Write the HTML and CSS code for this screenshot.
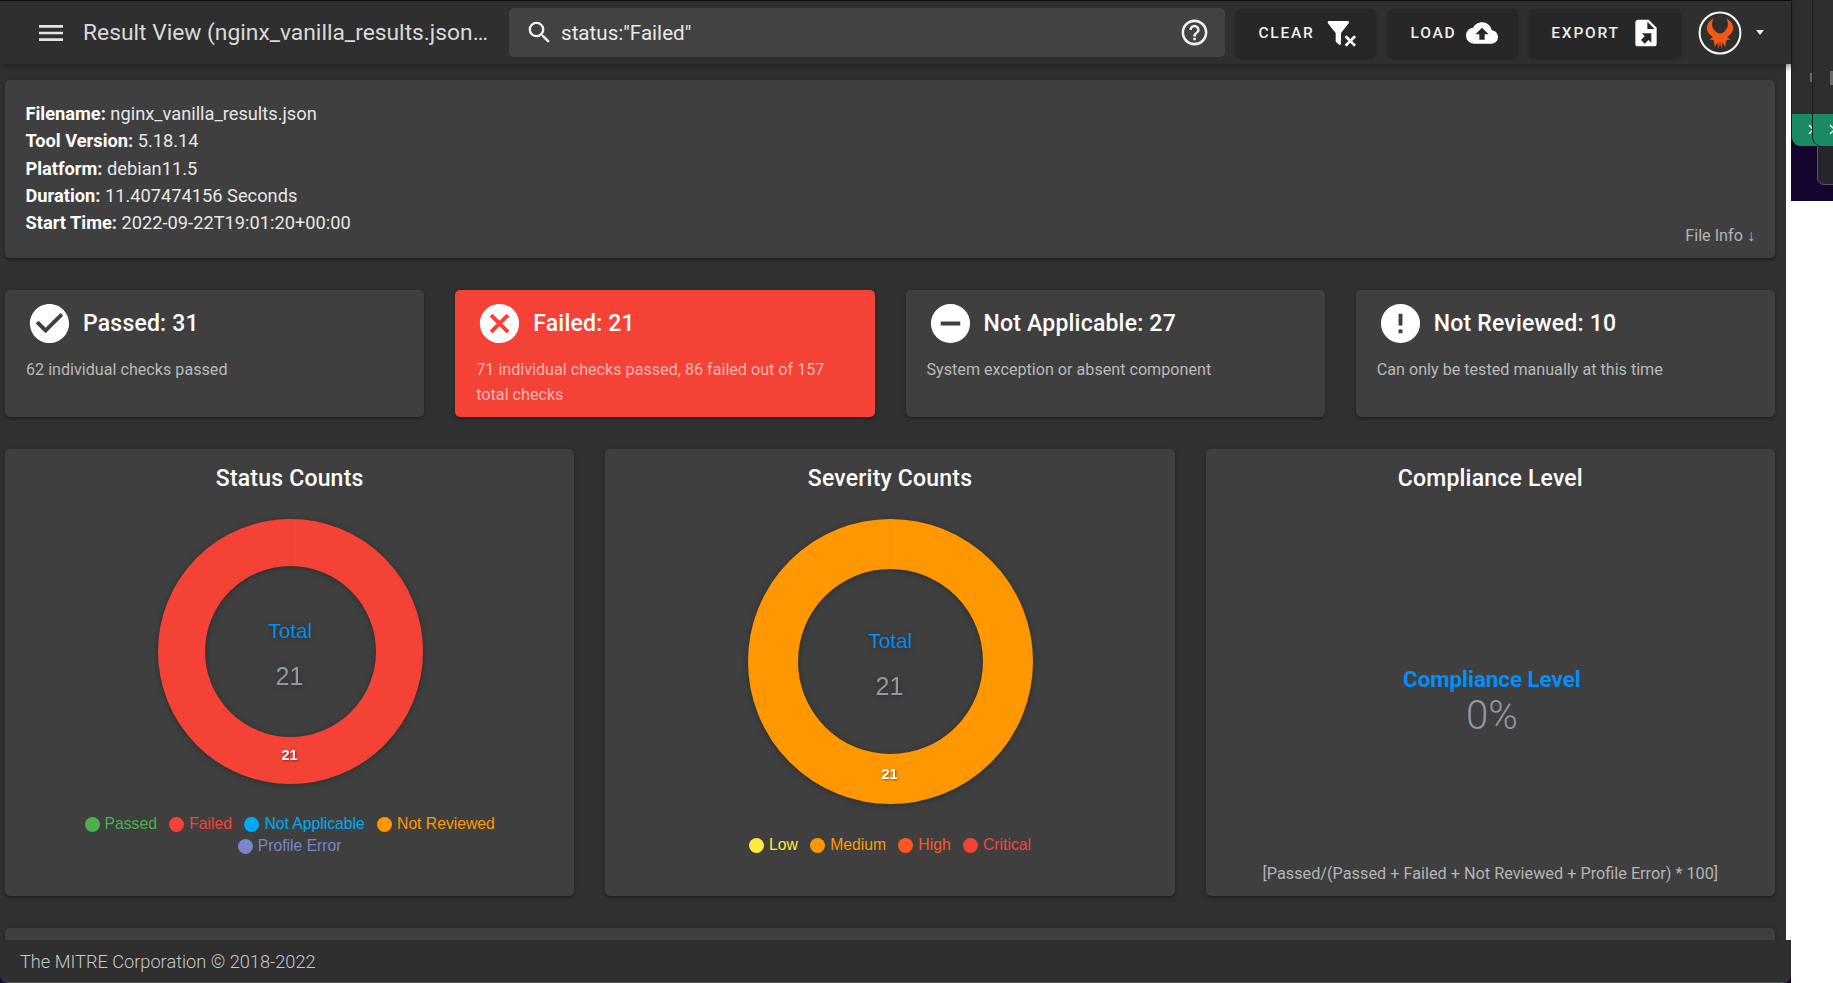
FILE: index.html
```html
<!DOCTYPE html>
<html lang="en">
<head>
    <meta charset="UTF-8">
    <meta name="viewport" content="width=device-width, initial-scale=1.0">
    <title>Result View</title>
    <link rel="stylesheet" href="styles.css">
</head>
<body>
    <div class="app">
        <header class="topbar">
            <button class="icon-btn menu-btn" aria-label="Menu">
                <svg viewBox="0 0 24 24" class="icon-menu"><path d="M3,6H21V8H3V6M3,11H21V13H3V11M3,16H21V18H3V16Z"/></svg>
            </button>
            <div class="topbar-title">Result View (nginx_vanilla_results.json…</div>
            <div class="search">
                <svg viewBox="0 0 24 24" class="icon-search"><path d="M9.5,3A6.5,6.5 0 0,1 16,9.5C16,11.11 15.41,12.59 14.44,13.73L14.71,14H15.5L20.5,19L19,20.5L14,15.5V14.71L13.73,14.44C12.59,15.41 11.11,16 9.5,16A6.5,6.5 0 0,1 3,9.5A6.5,6.5 0 0,1 9.5,3M9.5,5C7,5 5,7 5,9.5C5,12 7,14 9.5,14C12,14 14,12 14,9.5C14,7 12,5 9.5,5Z"/></svg>
                <span class="search-text">status:"Failed"</span>
                <svg viewBox="0 0 24 24" class="icon-help"><path d="M11,18H13V16H11V18M12,2A10,10 0 0,0 2,12A10,10 0 0,0 12,22A10,10 0 0,0 22,12A10,10 0 0,0 12,2M12,20C7.59,20 4,16.41 4,12C4,7.59 7.59,4 12,4C16.41,4 20,7.59 20,12C20,16.41 16.41,20 12,20M12,6A4,4 0 0,0 8,10H10A2,2 0 0,1 12,8A2,2 0 0,1 14,10C14,12 11,11.75 11,15H13C13,12.75 16,12.5 16,10A4,4 0 0,0 12,6Z"/></svg>
            </div>
            <button class="bar-btn btn-clear">Clear
                <svg viewBox="0 0 24 24"><path d="M14.76,20.83L17.6,18L14.76,15.17L16.17,13.76L19,16.57L21.83,13.76L23.24,15.17L20.41,18L23.24,20.83L21.83,22.24L19,19.4L16.17,22.24L14.76,20.83M12,12V19.88C12.04,20.18 11.94,20.5 11.71,20.71C11.32,21.1 10.69,21.1 10.3,20.71L8.29,18.7C8.06,18.47 7.96,18.16 8,17.87V12H7.97L2.21,4.62C1.87,4.19 1.95,3.56 2.38,3.22C2.57,3.08 2.78,3 3,3V3H17V3C17.22,3 17.43,3.08 17.62,3.22C18.05,3.56 18.13,4.19 17.79,4.62L12.03,12H12Z"/></svg>
            </button>
            <button class="bar-btn btn-load">Load
                <svg viewBox="0 0 24 24"><path d="M14,13V17H10V13H7L12,8L17,13M19.35,10.03C18.67,6.59 15.64,4 12,4C9.11,4 6.6,5.64 5.35,8.03C2.34,8.36 0,10.9 0,14A6,6 0 0,0 6,20H19A5,5 0 0,0 24,15C24,12.36 21.95,10.22 19.35,10.03Z"/></svg>
            </button>
            <button class="bar-btn btn-export">Export
                <svg viewBox="0 0 24 24"><path d="M6,2C4.89,2 4,2.9 4,4V20A2,2 0 0,0 6,22H18A2,2 0 0,0 20,20V8L14,2M13,3.5L18.5,9H13M8.93,12.22H16V19.29L13.88,17.17L11.05,20L8.22,17.17L11.05,14.35"/></svg>
            </button>
            <div class="user">
                <svg viewBox="0 0 44 44" class="logo">
                    <circle cx="22" cy="22" r="20.4" fill="none" stroke="#fff" stroke-width="2"/>
                    <path fill="#f4590f" d="M15.7 7.5C10.5 10 8 14.5 9 19C9.8 22.5 13 24.5 15 26L11.5 28.5L15.5 29L17 36L19.5 31L20.5 38L22 30L23.5 38L24.5 31L27 36L28.5 29L32.5 28.5L29 26C31 24.5 34.2 22.5 35 19C36 14.5 33.5 10 28.3 7.5C30.5 11 30.5 15 28.5 18C26.5 20.8 24.5 22.5 22 22.5C19.5 22.5 17.5 20.8 15.5 18C13.5 15 13.5 11 15.7 7.5Z"/>
                </svg>
                <span class="caret"></span>
            </div>
        </header>

        <div class="page">
            <main class="content">
                <section class="card file-info">
                    <div class="file-row"><b>Filename:</b> nginx_vanilla_results.json</div>
                    <div class="file-row"><b>Tool Version:</b> 5.18.14</div>
                    <div class="file-row"><b>Platform:</b> debian11.5</div>
                    <div class="file-row"><b>Duration:</b> 11.407474156 Seconds</div>
                    <div class="file-row"><b>Start Time:</b> 2022-09-22T19:01:20+00:00</div>
                    <span class="file-toggle">File Info ↓</span>
                </section>

                <section class="status-row">
                    <div class="card status-card">
                        <div class="status-head">
                            <svg viewBox="0 0 24 24"><path d="M12 2C6.5 2 2 6.5 2 12S6.5 22 12 22 22 17.5 22 12 17.5 2 12 2M10 17L5 12L6.41 10.59L10 14.17L17.59 6.58L19 8L10 17Z"/></svg>
                            <span>Passed: 31</span>
                        </div>
                        <p>62 individual checks passed</p>
                    </div>
                    <div class="card status-card failed">
                        <div class="status-head">
                            <svg viewBox="0 0 24 24"><path d="M12,2C17.53,2 22,6.47 22,12C22,17.53 17.53,22 12,22C6.47,22 2,17.53 2,12C2,6.47 6.47,2 12,2M15.59,7L12,10.59L8.41,7L7,8.41L10.59,12L7,15.59L8.41,17L12,13.41L15.59,17L17,15.59L13.41,12L17,8.41L15.59,7Z"/></svg>
                            <span>Failed: 21</span>
                        </div>
                        <p>71 individual checks passed, 86 failed out of 157 total checks</p>
                    </div>
                    <div class="card status-card">
                        <div class="status-head">
                            <svg viewBox="0 0 24 24"><path d="M17,13H7V11H17M12,2A10,10 0 0,0 2,12A10,10 0 0,0 12,22A10,10 0 0,0 22,12A10,10 0 0,0 12,2Z"/></svg>
                            <span>Not Applicable: 27</span>
                        </div>
                        <p>System exception or absent component</p>
                    </div>
                    <div class="card status-card">
                        <div class="status-head">
                            <svg viewBox="0 0 24 24"><path d="M13,13H11V7H13M13,17H11V15H13M12,2A10,10 0 0,0 2,12A10,10 0 0,0 12,22A10,10 0 0,0 22,12A10,10 0 0,0 12,2Z"/></svg>
                            <span>Not Reviewed: 10</span>
                        </div>
                        <p>Can only be tested manually at this time</p>
                    </div>
                </section>

                <section class="chart-row">
                    <div class="card chart-card">
                        <h3>Status Counts</h3>
                        <svg class="donut donut-status" viewBox="0 0 265 265">
                            <circle cx="132.5" cy="132.5" r="109" fill="none" stroke="#f44336" stroke-width="47"/>
                            <line x1="132.5" y1="0" x2="132.5" y2="47" class="donut-seam"/>
                            <text x="132" y="119" class="donut-label">Total</text>
                            <text x="131.5" y="166" class="donut-total">21</text>
                            <text x="131.5" y="241" class="donut-slice">21</text>
                        </svg>
                        <div class="legend legend-status">
                            <span class="legend-item c-passed"><i></i>Passed</span>
                            <span class="legend-item c-failed"><i></i>Failed</span>
                            <span class="legend-item c-na"><i></i>Not Applicable</span>
                            <span class="legend-item c-nr"><i></i>Not Reviewed</span>
                            <span class="legend-item c-error"><i></i>Profile Error</span>
                        </div>
                    </div>
                    <div class="card chart-card">
                        <h3>Severity Counts</h3>
                        <svg class="donut donut-severity" viewBox="0 0 285 285">
                            <circle cx="142.5" cy="142.5" r="117.5" fill="none" stroke="#ff9800" stroke-width="50"/>
                            <line x1="142.5" y1="0" x2="142.5" y2="50" class="donut-seam"/>
                            <text x="142" y="129" class="donut-label">Total</text>
                            <text x="141.5" y="176" class="donut-total">21</text>
                            <text x="141.5" y="260" class="donut-slice">21</text>
                        </svg>
                        <div class="legend legend-severity">
                            <span class="legend-item c-low"><i></i>Low</span>
                            <span class="legend-item c-medium"><i></i>Medium</span>
                            <span class="legend-item c-high"><i></i>High</span>
                            <span class="legend-item c-critical"><i></i>Critical</span>
                        </div>
                    </div>
                    <div class="card chart-card compliance">
                        <h3>Compliance Level</h3>
                        <div class="compliance-body">
                            <div class="compliance-label">Compliance Level</div>
                            <div class="compliance-value">0%</div>
                        </div>
                        <div class="compliance-note">[Passed/(Passed + Failed + Not Reviewed + Profile Error) * 100]</div>
                    </div>
                </section>

                <section class="card next-card"></section>
            </main>
            <div class="scrollbar"></div>
        </div>

        <footer class="footer">The MITRE Corporation © 2018-2022</footer>
    </div>

    <div class="desktop">
        <div class="win win-back">
            <span class="win-mark"></span>
            <div class="win-bar"><svg viewBox="0 0 10 10"><path d="M1 1L9 9M9 1L1 9"/></svg></div>
        </div>
        <div class="win-low"></div>
        <div class="win win-front">
            <span class="win-mark"></span>
            <div class="win-bar"><svg viewBox="0 0 10 10"><path d="M1 1L9 9M9 1L1 9"/></svg></div>
        </div>
    </div>
</body>
</html>
```

FILE: styles.css
```css
* {
    box-sizing: border-box;
}
body {
    margin: 0;
    height: 100vh;
    overflow: hidden;
    display: flex;
    align-items: flex-start;
    background: #fff;
    font-family: Roboto, "Liberation Sans", sans-serif;
    color: #fff;
}
.app {
    width: 1791px;
    height: 983px;
    display: flex;
    flex-direction: column;
    background: #1c0a3c;
    flex: none;
}

/* top bar */
.topbar {
    height: 64px;
    flex: none;
    display: flex;
    align-items: center;
    background: #2f2f2f;
    border-top: 1px solid #111;
    box-shadow: 0 2px 6px rgba(0,0,0,0.35);
    position: relative;
    z-index: 2;
}
.icon-btn {
    background: none;
    border: none;
    padding: 0;
    display: flex;
}
.menu-btn {
    margin-left: 35px;
}
.icon-menu {
    width: 32px;
    height: 32px;
    fill: #e4e4e4;
}
.topbar-title {
    width: 410px;
    flex: none;
    margin-left: 16px;
    font-size: 22.8px;
    color: #d9d9d9;
    white-space: nowrap;
}
.search {
    width: 716px;
    height: 49px;
    margin-left: 16px;
    display: flex;
    align-items: center;
    background: #424242;
    border-radius: 5px;
    padding: 0 15px 0 16px;
}
.icon-search {
    width: 29px;
    height: 29px;
    fill: #f0f0f0;
}
.search-text {
    flex: 1;
    margin-left: 7px;
    margin-top: 1px;
    font-size: 20.6px;
    color: #e8e8e8;
}
.icon-help {
    width: 31px;
    height: 31px;
    fill: #f0f0f0;
}
.bar-btn {
    height: 48px;
    margin-left: 11px;
    padding: 0 0 0 3px;
    display: flex;
    align-items: center;
    justify-content: center;
    gap: 10px;
    background: #272727;
    border: none;
    border-radius: 5px;
    box-shadow: 0 2px 3px rgba(0,0,0,0.25);
    color: #eee;
    font-family: inherit;
    font-size: 15.5px;
    font-weight: 500;
    letter-spacing: 1.75px;
    text-transform: uppercase;
}
.bar-btn svg {
    width: 32px;
    height: 32px;
    fill: #fff;
}
.btn-clear {
    width: 140px;
}
.btn-load {
    width: 130px;
    margin-left: 12px;
}
.btn-export {
    width: 152px;
}
.user {
    display: flex;
    align-items: center;
    margin-left: 17px;
}
.logo {
    width: 44px;
    height: 44px;
}
.caret {
    width: 0;
    height: 0;
    margin-left: 14px;
    border-left: 4.5px solid transparent;
    border-right: 4.5px solid transparent;
    border-top: 5px solid #eee;
}

/* main area */
.page {
    flex: 1;
    min-height: 0;
    display: flex;
    overflow: hidden;
}
.content {
    width: 1786px;
    background: #303030;
    padding: 16px 11px 0 5px;
    overflow: hidden;
}
.scrollbar {
    width: 5px;
    background: linear-gradient(#c9c9c9, #fff 8px);
}
.card {
    background: #3f3f3f;
    border-radius: 5px;
    box-shadow: 0 2px 2px rgba(0,0,0,0.22), 0 1px 5px rgba(0,0,0,0.14);
}
.file-info {
    position: relative;
    height: 178px;
    padding: 20px 20.5px;
    font-size: 18.25px;
    color: #e6e6e6;
}
.file-row {
    line-height: 27.3px;
}
.file-row b {
    font-weight: 700;
    color: #fff;
}
.file-toggle {
    position: absolute;
    right: 20px;
    bottom: 13px;
    font-size: 16.2px;
    color: #b4b4b4;
}

.status-row {
    display: grid;
    grid-template-columns: repeat(4, 1fr);
    gap: 31px;
    margin-top: 32px;
}
.status-card {
    height: 127px;
    padding: 10px 21px 0;
}
.status-head {
    display: flex;
    align-items: center;
    height: 47px;
    font-size: 23px;
    font-weight: 500;
    letter-spacing: 0.2px;
}
.status-head svg {
    width: 47px;
    height: 47px;
    fill: #fff;
    margin-right: 10px;
    flex: none;
}
.status-card p {
    margin: 10px 0 0;
    font-size: 16.15px;
    line-height: 25px;
    color: #b9b9b9;
}
.status-card.failed {
    background: #f44336;
}
.status-card.failed p {
    color: #fbb4af;
}

.chart-row {
    display: grid;
    grid-template-columns: repeat(3, 1fr);
    gap: 31px;
    margin-top: 32px;
}
.chart-card {
    height: 447px;
    display: flex;
    flex-direction: column;
    align-items: center;
}
.chart-card h3 {
    margin: 15px 0 0;
    font-size: 23px;
    line-height: 29px;
    font-weight: 500;
    letter-spacing: 0.2px;
}
.donut {
    flex: none;
    margin-left: 2px;
    filter: drop-shadow(0 1px 3px rgba(0,0,0,0.3));
}
.donut-status {
    width: 265px;
    height: 265px;
    margin-top: 26px;
}
.donut-severity {
    width: 285px;
    height: 285px;
    margin-top: 26px;
}
.donut-seam {
    stroke: rgba(0,0,0,0.04);
    stroke-width: 1;
}
.donut text {
    font-family: "Liberation Sans", Arial, sans-serif;
    text-anchor: middle;
}
.donut-label {
    font-size: 20.8px;
    fill: #008ffb;
}
.donut-total {
    font-size: 25px;
    fill: #8f98a3;
}
.donut-slice {
    font-size: 14.5px;
    font-weight: 700;
    fill: #fff;
    filter: drop-shadow(1px 1px 1px rgba(0,0,0,0.45));
}
.legend {
    display: flex;
    flex-wrap: wrap;
    justify-content: center;
    font-family: "Liberation Sans", Arial, sans-serif;
    font-size: 15.7px;
    line-height: 22px;
}
.legend-status {
    width: 480px;
    margin-top: 29px;
}
.legend-severity {
    margin-top: 30px;
}
.legend-item {
    display: flex;
    align-items: center;
    margin: 0 6.2px;
}
.legend-item i {
    width: 15px;
    height: 15px;
    margin-right: 5px;
    border-radius: 50%;
    background: currentColor;
}
.c-passed { color: #4caf50; }
.c-failed { color: #f44336; }
.c-na { color: #03a9f4; }
.c-nr { color: #ff9800; }
.c-error { color: #7986cb; }
.c-low { color: #ffeb3b; }
.c-medium { color: #ff9800; }
.c-high { color: #ff5722; }
.c-critical { color: #f44336; }

.compliance-body {
    margin-top: 172px;
    margin-left: 3px;
    display: flex;
    flex-direction: column;
    align-items: center;
}
.compliance-label {
    font-size: 22.3px;
    line-height: 28px;
    font-weight: 700;
    color: #008ffb;
}
.compliance-value {
    font-size: 40px;
    line-height: 46px;
    font-weight: 300;
    color: #8f98a3;
}
.compliance-note {
    margin-top: auto;
    margin-bottom: 10px;
    font-size: 16.25px;
    line-height: 24px;
    color: #b4b4b4;
}
.next-card {
    height: 60px;
    margin-top: 32px;
}

.footer {
    height: 43px;
    flex: none;
    display: flex;
    align-items: center;
    padding-left: 20px;
    background: #2f2f2f;
    border-radius: 0 0 9px 9px;
    border-bottom: 1px solid #555;
    font-size: 18.2px;
    font-weight: 300;
    color: #c8c8c8;
    position: relative;
    z-index: 2;
}

/* other windows showing behind the browser */
.desktop {
    position: relative;
    width: 42px;
    height: 201px;
    flex: none;
    background: #14052e;
    overflow: hidden;
}
.win {
    position: absolute;
    top: -2px;
    width: 60px;
    height: 148px;
    background: #2e2e2e;
    border-left: 1px solid #1c1c1c;
    border-radius: 0 0 0 9px;
    overflow: hidden;
}
.win-back {
    left: 0;
}
.win-front {
    left: 21px;
}
.win-mark {
    position: absolute;
    left: 18px;
    top: 75px;
    width: 5px;
    height: 9px;
    background: #6a6a6a;
}
.win-front .win-mark {
    left: 17px;
    width: 8px;
    height: 14px;
    top: 73px;
}
.win-bar {
    position: absolute;
    left: 0;
    right: 0;
    bottom: 0;
    height: 32px;
    background: #1a8a65;
    padding: 10px 0 0 16px;
}
.win-bar svg {
    display: block;
    width: 11px;
    height: 11px;
    fill: none;
    stroke: #d8efe6;
    stroke-width: 1.4;
}
.win-low {
    position: absolute;
    left: 26px;
    top: 140px;
    width: 40px;
    height: 45px;
    background: #24262b;
    border: 1px solid #55585e;
    border-radius: 7px;
}
```
